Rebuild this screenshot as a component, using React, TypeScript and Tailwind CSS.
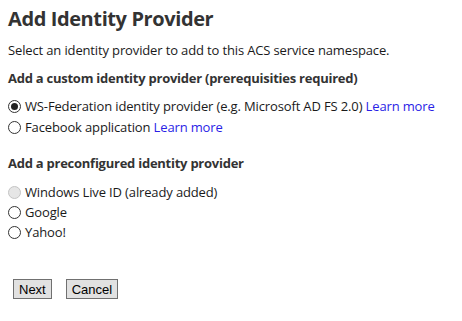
const Radio = ({ checked = false, disabled = false }: { checked?: boolean; disabled?: boolean }) => (
  <span
    className={`inline-flex h-[13px] w-[13px] shrink-0 items-center justify-center rounded-full border ${
      disabled ? "border-[#c4c4c4] bg-[#e6e6e6]" : "border-[#333] bg-white"
    }`}
  >
    {checked && <span className="h-[7px] w-[7px] rounded-full bg-[#222]" />}
  </span>
);

const Option = ({
  label,
  checked,
  disabled,
  link,
}: {
  label: string;
  checked?: boolean;
  disabled?: boolean;
  link?: boolean;
}) => (
  <label className="flex h-[21px] items-center gap-[4px]">
    <Radio checked={checked} disabled={disabled} />
    <span>
      {label}
      {link && (
        <>
          {" "}
          <a href="#" className="text-[#2a1ee6]">
            Learn more
          </a>
        </>
      )}
    </span>
  </label>
);

export default function App() {
  return (
    <div className="min-h-screen bg-white px-2 pt-[6px] font-['Open_Sans',sans-serif] text-[13px] tracking-[-0.14px] text-[#1a1a1a]">
      <h1 className="text-[20px] font-bold leading-[26px] tracking-[-0.4px] text-[#333]">Add Identity Provider</h1>
      <p className="mt-[9px] leading-[18px]">Select an identity provider to add to this ACS service namespace.</p>

      <h2 className="mt-[10px] font-bold leading-[18px] tracking-[-0.25px] text-[#333]">
        Add a custom identity provider (prerequisities required)
      </h2>
      <div className="mt-[9px]">
        <Option label="WS-Federation identity provider (e.g. Microsoft AD FS 2.0)" checked link />
        <Option label="Facebook application" link />
      </div>

      <h2 className="mt-[16px] font-bold leading-[18px] tracking-[-0.25px] text-[#333]">
        Add a preconfigured identity provider
      </h2>
      <div className="mt-[10px] flex flex-col gap-0">
        <Option label="Windows Live ID (already added)" disabled />
        <div className="-mt-px">
          <Option label="Google" />
        </div>
        <div className="-mt-px">
          <Option label="Yahoo!" />
        </div>
      </div>

      <div className="mt-[36px] flex gap-[14px] pl-[5px] font-['Liberation_Sans',sans-serif] text-[13px] tracking-normal">
        <button className="h-[20px] border border-[#707070] bg-[#e1e1e1] px-[5px] text-black">Next</button>
        <button className="h-[20px] border border-[#707070] bg-[#e1e1e1] px-[5px] text-black">Cancel</button>
      </div>
    </div>
  );
}
